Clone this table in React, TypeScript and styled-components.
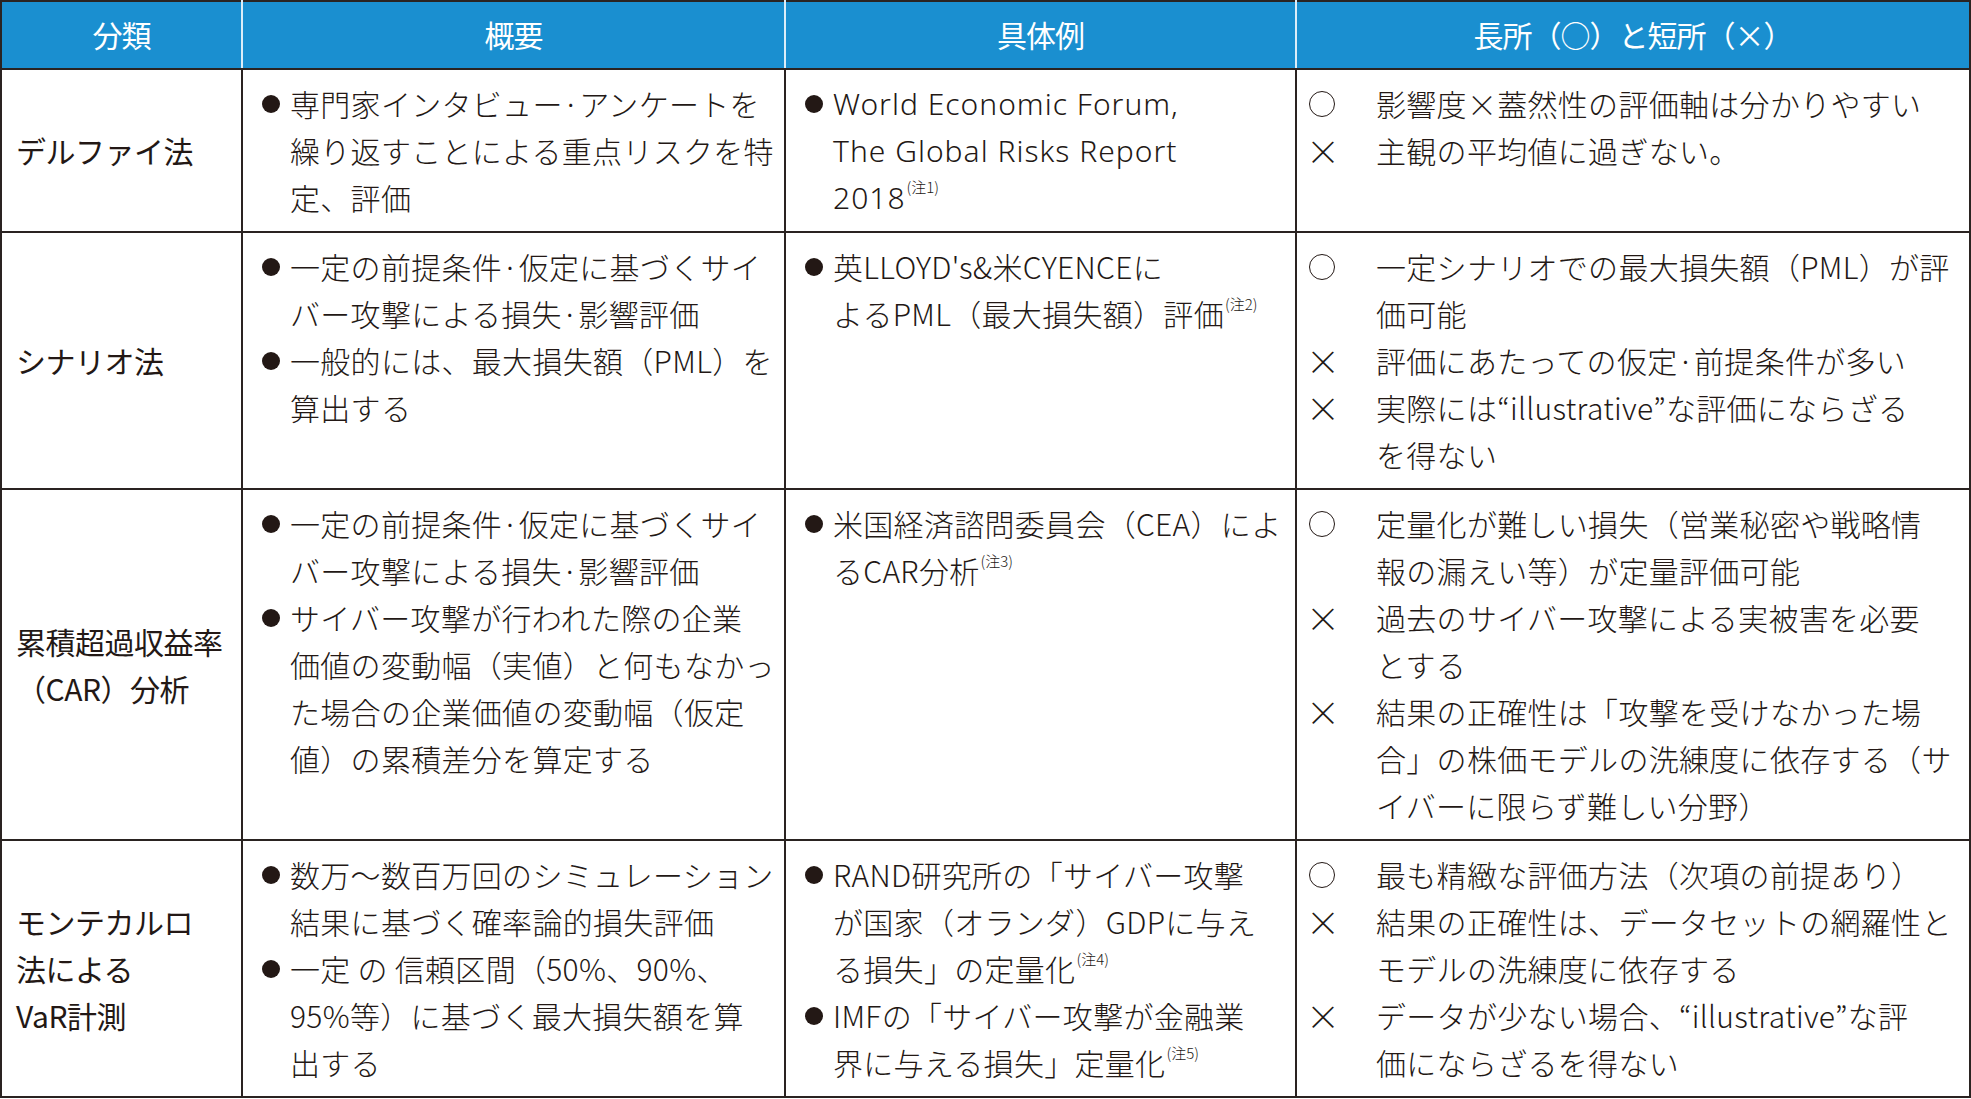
import React from "react";
import styled, { createGlobalStyle } from "styled-components";

const INK = "#2a2321";
const BLUE = "#1a8fd0";

const GlobalStyle = createGlobalStyle`
    body {
        margin: 0;
        background: #ffffff;
        color: #231815;
        font-family: "Noto Sans CJK JP", "Noto Sans", sans-serif;
    }
`;

const Table = styled.table`
    width: 1969px;
    border-collapse: collapse;
    table-layout: fixed;
`;

const HeadCell = styled.th`
    height: 64px;
    padding: 0 0 2px;
    background: ${BLUE};
    color: #ffffff;
    font-size: 30px;
    font-weight: 400;
    letter-spacing: -1px;
    text-align: center;
    border-top: 2px solid ${INK};
    border-bottom: 2px solid ${INK};
    border-left: 2px solid #dcedf8;
    border-right: 2px solid #dcedf8;
    &:first-child {
        border-left-color: ${INK};
    }
    &:last-child {
        border-right-color: ${INK};
    }
`;

const Cell = styled.td`
    border: 2px solid ${INK};
    vertical-align: top;
    padding: 10px 6px 10px 19px;
    font-size: 30px;
    font-weight: 300;
    line-height: 47px;
    white-space: nowrap;
`;

const NameCell = styled(Cell)`
    vertical-align: middle;
    padding-left: 14px;
    font-weight: 400;
    letter-spacing: -0.5px;
`;

const ProsCell = styled(Cell)`
    padding-left: 12px;
`;

const Item = styled.div`
    display: flex;
`;

const Marker = styled.div`
    flex: 0 0 28px;
    height: 47px;
    display: flex;
    align-items: center;
`;

const Dot = styled.span`
    width: 18px;
    height: 18px;
    border-radius: 50%;
    background: #231815;
`;

const Sign = styled.div`
    flex: 0 0 67px;
    height: 47px;
    display: flex;
    align-items: center;
`;

const Circle = styled.span`
    display: block;
    width: 24px;
    height: 24px;
    border-radius: 50%;
    border: 1.5px solid #231815;
`;

const Cross = styled.span`
    display: block;
    font-size: 34px;
    font-weight: 300;
    line-height: 47px;
    margin-left: -3px;
`;

const Lines = styled.div<{ $latin?: boolean }>`
    font-family: ${(p) =>
        p.$latin ? `"Noto Sans", "Noto Sans CJK JP", sans-serif` : "inherit"};
    letter-spacing: ${(p) => (p.$latin ? "1px" : "0.3px")};
`;

const Note = styled.sup`
    font-family: "Noto Sans CJK JP", sans-serif;
    font-size: 15px;
    line-height: 0;
    vertical-align: 0;
    position: relative;
    top: -16px;
    margin-left: 1px;
    letter-spacing: 0;
`;

type Line = string | [string, string];
type Bullet = { lines: Line[]; latin?: boolean };
type Point = { kind: "good" | "bad"; lines: string[] };
type Row = { name: string[]; summary: Bullet[]; examples: Bullet[]; points: Point[] };

const rows: Row[] = [
    {
        name: ["デルファイ法"],
        summary: [
            {
                lines: [
                    "専門家インタビュー·アンケートを",
                    "繰り返すことによる重点リスクを特",
                    "定、評価",
                ],
            },
        ],
        examples: [
            {
                latin: true,
                lines: [
                    "World Economic Forum,",
                    "The Global Risks Report",
                    ["2018", "(注1)"],
                ],
            },
        ],
        points: [
            { kind: "good", lines: ["影響度×蓋然性の評価軸は分かりやすい"] },
            { kind: "bad", lines: ["主観の平均値に過ぎない。"] },
        ],
    },
    {
        name: ["シナリオ法"],
        summary: [
            { lines: ["一定の前提条件·仮定に基づくサイ", "バー攻撃による損失·影響評価"] },
            { lines: ["一般的には、最大損失額（PML）を", "算出する"] },
        ],
        examples: [
            {
                lines: ["英LLOYD's&米CYENCEに", ["よるPML（最大損失額）評価", "(注2)"]],
            },
        ],
        points: [
            { kind: "good", lines: ["一定シナリオでの最大損失額（PML）が評", "価可能"] },
            { kind: "bad", lines: ["評価にあたっての仮定·前提条件が多い"] },
            { kind: "bad", lines: ["実際には“illustrative”な評価にならざる", "を得ない"] },
        ],
    },
    {
        name: ["累積超過収益率", "（CAR）分析"],
        summary: [
            { lines: ["一定の前提条件·仮定に基づくサイ", "バー攻撃による損失·影響評価"] },
            {
                lines: [
                    "サイバー攻撃が行われた際の企業",
                    "価値の変動幅（実値）と何もなかっ",
                    "た場合の企業価値の変動幅（仮定",
                    "値）の累積差分を算定する",
                ],
            },
        ],
        examples: [{ lines: ["米国経済諮問委員会（CEA）によ", ["るCAR分析", "(注3)"]] }],
        points: [
            { kind: "good", lines: ["定量化が難しい損失（営業秘密や戦略情", "報の漏えい等）が定量評価可能"] },
            { kind: "bad", lines: ["過去のサイバー攻撃による実被害を必要", "とする"] },
            {
                kind: "bad",
                lines: [
                    "結果の正確性は「攻撃を受けなかった場",
                    "合」の株価モデルの洗練度に依存する（サ",
                    "イバーに限らず難しい分野）",
                ],
            },
        ],
    },
    {
        name: ["モンテカルロ", "法による", "VaR計測"],
        summary: [
            { lines: ["数万〜数百万回のシミュレーション", "結果に基づく確率論的損失評価"] },
            { lines: ["一定 の 信頼区間（50%、90%、", "95%等）に基づく最大損失額を算", "出する"] },
        ],
        examples: [
            {
                lines: [
                    "RAND研究所の「サイバー攻撃",
                    "が国家（オランダ）GDPに与え",
                    ["る損失」の定量化", "(注4)"],
                ],
            },
            { lines: ["IMFの「サイバー攻撃が金融業", ["界に与える損失」定量化", "(注5)"]] },
        ],
        points: [
            { kind: "good", lines: ["最も精緻な評価方法（次項の前提あり）"] },
            { kind: "bad", lines: ["結果の正確性は、データセットの網羅性と", "モデルの洗練度に依存する"] },
            { kind: "bad", lines: ["データが少ない場合、“illustrative”な評", "価にならざるを得ない"] },
        ],
    },
];

const TextLines = ({ lines, latin }: { lines: Line[]; latin?: boolean }) => (
    <Lines $latin={latin}>
        {lines.map((l, i) =>
            typeof l === "string" ? (
                <div key={i}>{l}</div>
            ) : (
                <div key={i}>
                    {l[0]}
                    <Note>{l[1]}</Note>
                </div>
            )
        )}
    </Lines>
);

const BulletList = ({ items }: { items: Bullet[] }) => (
    <>
        {items.map((b, i) => (
            <Item key={i}>
                <Marker>
                    <Dot />
                </Marker>
                <TextLines lines={b.lines} latin={b.latin} />
            </Item>
        ))}
    </>
);

const App = () => {
    return (
        <>
            <GlobalStyle />
            <Table>
                <colgroup>
                    <col style={{ width: 241 }} />
                    <col style={{ width: 543 }} />
                    <col style={{ width: 511 }} />
                    <col style={{ width: 674 }} />
                </colgroup>
                <thead>
                    <tr>
                        <HeadCell>分類</HeadCell>
                        <HeadCell>概要</HeadCell>
                        <HeadCell>具体例</HeadCell>
                        <HeadCell>長所（○）と短所（×）</HeadCell>
                    </tr>
                </thead>
                <tbody>
                    {rows.map((r, i) => (
                        <tr key={i}>
                            <NameCell>
                                {r.name.map((n) => (
                                    <div key={n}>{n}</div>
                                ))}
                            </NameCell>
                            <Cell>
                                <BulletList items={r.summary} />
                            </Cell>
                            <Cell>
                                <BulletList items={r.examples} />
                            </Cell>
                            <ProsCell>
                                {r.points.map((p, j) => (
                                    <Item key={j}>
                                        <Sign>{p.kind === "good" ? <Circle /> : <Cross>×</Cross>}</Sign>
                                        <TextLines lines={p.lines} />
                                    </Item>
                                ))}
                            </ProsCell>
                        </tr>
                    ))}
                </tbody>
            </Table>
        </>
    );
};

export default App;
